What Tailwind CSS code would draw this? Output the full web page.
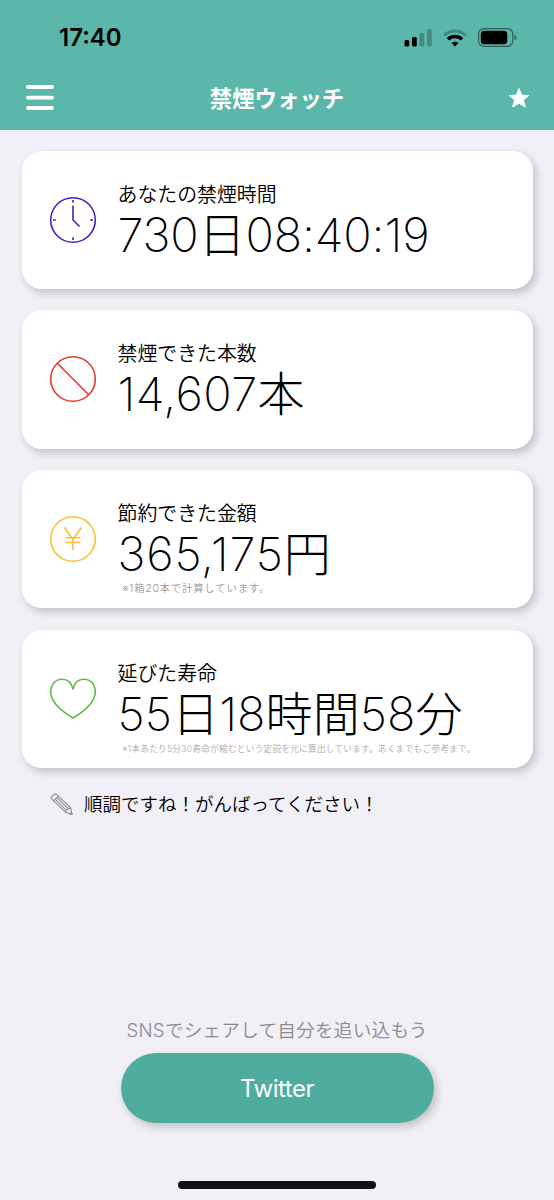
<!DOCTYPE html>
<html lang="ja">
  <head>
    <meta charset="UTF-8" />
    <meta name="viewport" content="width=device-width, initial-scale=1.0" />
    <title>禁煙ウォッチ</title>
    <script src="https://cdn.jsdelivr.net/npm/@tailwindcss/browser@4"></script>
  </head>

  <body
    class="flex h-[1200px] w-[554px] flex-col overflow-hidden bg-[#f1f0f6] font-['Inter','Noto_Sans_CJK_JP',sans-serif] text-black"
  >
    <!-- header -->
    <header class="h-[130px] shrink-0 bg-[#5bb7aa]">
      <div class="flex h-[75px] items-center justify-between pr-[37px] pl-[59px]">
        <span class="text-[24px] font-semibold">17:40</span>
        <div class="flex items-center">
          <svg class="h-[18px] w-7" viewBox="0 0 28 18">
            <rect x="0.5" y="11" width="4.8" height="6.5" rx="1.5" />
            <rect x="8" y="8" width="4.8" height="9.5" rx="1.5" />
            <rect x="15.5" y="4" width="4.8" height="13.5" rx="1.5" fill-opacity=".25" />
            <rect x="23" y="0" width="4.8" height="17.5" rx="1.5" fill-opacity=".25" />
          </svg>
          <svg class="ml-[11px] h-[18px] w-6" viewBox="0 0 24 18" fill="none" stroke="#000">
            <path d="M1.3 6.4C7.2.5 16.8.5 22.7 6.4" stroke-width="3.2" opacity=".25" />
            <path d="M5 10.3C9 6.6 15 6.6 19 10.3" stroke-width="3.4" />
            <path d="M8.6 14C10.5 12.2 13.5 12.2 15.4 14L12 17.4Z" fill="#000" stroke="none" />
          </svg>
          <svg class="ml-[11px] h-[19px] w-[39px]" viewBox="0 0 39 19">
            <rect x=".6" y=".6" width="34.2" height="17.8" rx="5.5" fill="none" stroke="#000" stroke-width="1.2" opacity=".5" />
            <rect x="2.8" y="2.7" width="26.5" height="13.6" rx="3.5" />
            <path d="M36.6 6.5C39 7.5 39 11.5 36.6 12.5Z" opacity=".5" />
          </svg>
        </div>
      </div>
      <div class="flex h-[46px] items-center justify-between pr-6 pl-[26px]">
        <svg class="h-[26px] w-7" viewBox="0 0 28 26" stroke="#fff" stroke-width="3.8" stroke-linecap="round">
          <path d="M2 2H26M2 12.7H26M2 23H26" />
        </svg>
        <h1 class="mr-2 pt-px text-[22.4px] font-bold text-white">禁煙ウォッチ</h1>
        <svg class="h-[21px] w-[22px]" viewBox="0 0 22 21" fill="#fff" stroke="#fff" stroke-width="1" stroke-linejoin="round">
          <path d="M11 .5L13.7 7.2L20.8 7.5L15.4 12L17.3 19L11 15.2L4.7 19L6.6 12L1.2 7.5L8.3 7.2Z" />
        </svg>
      </div>
    </header>

    <!-- cards -->
    <main class="flex flex-col gap-[21.2px] px-[21.5px] pt-[20.6px]">
      <section class="flex h-[138.5px] rounded-[20px] bg-white pt-[28px] pl-[27px] shadow-[3px_4px_8px_rgba(0,0,0,0.2)]">
        <svg class="mt-[17px] size-12" viewBox="0 0 48 48" fill="none" stroke="#4420c4" stroke-width="1.6">
          <circle cx="24" cy="24" r="22.3" />
          <path d="M24 9.5V24L30.5 30.5M24 4V6.8M24 41.2V44M4 24H6.8M41.2 24H44" />
        </svg>
        <div class="ml-[21px]">
          <p class="h-[29px] text-[19.9px] leading-[32px] font-[350]">あなたの禁煙時間</p>
          <p class="text-[47px] leading-[54px] font-extralight tracking-[-0.15px] whitespace-nowrap">730日08:40:19</p>
        </div>
      </section>

      <section class="flex h-[138.5px] rounded-[20px] bg-white pt-[28px] pl-[27px] shadow-[3px_4px_8px_rgba(0,0,0,0.2)]">
        <svg class="mt-[17px] size-12" viewBox="0 0 48 48" fill="none" stroke="#e63a2e" stroke-width="1.6">
          <circle cx="24" cy="24" r="22.3" />
          <path d="M8.3 8.3L39.7 39.7" />
        </svg>
        <div class="ml-[21px]">
          <p class="h-[29px] text-[19.9px] leading-[32px] font-[350]">禁煙できた本数</p>
          <p class="text-[47px] leading-[53px] font-extralight tracking-[0.4px] whitespace-nowrap">14,607本</p>
        </div>
      </section>

      <section class="flex h-[138.5px] rounded-[20px] bg-white pt-[28px] pl-[27px] shadow-[3px_4px_8px_rgba(0,0,0,0.2)]">
        <svg class="mt-[17px] size-12" viewBox="0 0 48 48" fill="none" stroke="#f5c033" stroke-width="1.6">
          <circle cx="24" cy="24" r="22.3" />
          <path d="M15.5 12.5L24 24.5L32.5 12.5M24 24.5V35M16.5 22.8H31.5M16.5 27.5H31.5" />
        </svg>
        <div class="ml-[21px]">
          <p class="h-[29px] text-[19.9px] leading-[32px] font-[350]">節約できた金額</p>
          <p class="text-[47px] leading-[54px] font-extralight tracking-[0.8px] whitespace-nowrap">365,175円</p>
          <p class="pl-[5px] text-[10.5px] leading-[16px] font-[350] tracking-[0.7px] text-[#999]">※1箱20本で計算しています。</p>
        </div>
      </section>

      <section class="flex h-[138.5px] rounded-[20px] bg-white pt-[28px] pl-[27px] shadow-[3px_4px_8px_rgba(0,0,0,0.2)]">
        <svg class="mt-[17px] size-12" viewBox="0 0 48 48" fill="none" stroke="#5dbb46" stroke-width="1.6" stroke-linejoin="round">
          <path d="M24 14C22.5 7.5 18 4.2 13 4.2C6.5 4.2 1.7 9.5 1.7 16.5C1.7 27 13 36.5 24 43C35 36.5 46.3 27 46.3 16.5C46.3 9.5 41.5 4.2 35 4.2C30 4.2 25.5 7.5 24 14Z" />
        </svg>
        <div class="ml-[21px]">
          <p class="h-[29px] text-[19.9px] leading-[32px] font-[350]">延びた寿命</p>
          <p class="text-[47px] leading-[54px] font-extralight tracking-[0.1px] whitespace-nowrap">55日18時間58分</p>
          <p class="pl-[5px] text-[8.6px] leading-[16px] font-[350] tracking-[0.3px] whitespace-nowrap text-[#aaa]">※1本あたり5分30寿命が縮むという定説を元に算出しています。あくまでもご参考まで。</p>
        </div>
      </section>
    </main>

    <div class="mt-[22px] flex h-[30px] items-center pl-[50px]">
      <svg class="size-6" viewBox="0 0 24 24" fill="none" stroke="#8d8d93" stroke-width="1.1" stroke-linejoin="round" stroke-linecap="round">
        <path d="M1.8 6.2L15.5 19.2L22 21.4L20.6 14.7L6.8 1.6C4.3-.2.3 3.8 1.8 6.2Z" />
        <path d="M3.6 7.8L8.4 3.1M5.2 6.2L16.4 17.4M7 4.6L18.6 15.8M15.5 19.2L16.4 17.4L18.6 15.8L20.6 14.7" />
        <path d="M20 20.7L21.6 19.5L22 21.4Z" fill="#8d8d93" />
      </svg>
      <p class="ml-[10px] text-[18.5px] font-[350]">順調ですね！がんばってください！</p>
    </div>

    <!-- share -->
    <footer class="mt-auto flex flex-col items-center">
      <p class="text-[18.6px] leading-7 font-[350] tracking-[0.25px] text-[#8a8a8f]">SNSでシェアして自分を追い込もう</p>
      <button class="mt-[9px] h-[70px] w-[313px] rounded-full bg-[#4fad9d] pt-[2px] text-[24px] tracking-[-0.5px] text-white shadow-[3px_4px_8px_rgba(0,0,0,0.2)]">Twitter</button>
      <div class="mt-[58px] mb-[11px] h-2 w-[198px] rounded-full bg-[#111]"></div>
    </footer>
  </body>
</html>
